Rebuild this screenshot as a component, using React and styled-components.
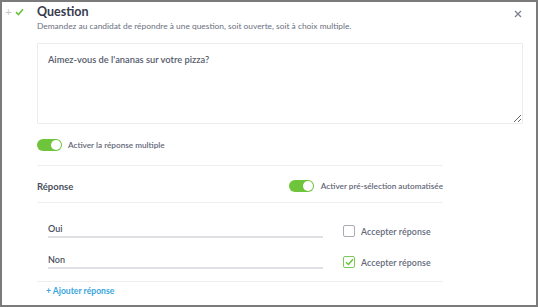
import React, { useState } from "react";
import styled, { createGlobalStyle } from "styled-components";

const GlobalStyle = createGlobalStyle`
  html, body {
    margin: 0;
    padding: 0;
    background: #fff;
  }
  * {
    box-sizing: border-box;
  }
`;

const App = () => {
  const [multiple, setMultiple] = useState(true);
  const [auto, setAuto] = useState(true);
  const [answers, setAnswers] = useState([
    { label: "Oui", accepted: false },
    { label: "Non", accepted: true },
  ]);

  const toggleAnswer = (i) => {
    setAnswers(answers.map((a, j) => (j === i ? { ...a, accepted: !a.accepted } : a)));
  };

  return (
    <>
      <GlobalStyle />
      <Frame>
        <Header>
          <HandleIcons>
            <PlusGlyph>+</PlusGlyph>
            <svg width="9" height="8" viewBox="0 0 9 8">
              <path d="M1 4.2 L3.4 6.5 L8 1.2" fill="none" stroke="#6cc33c" strokeWidth="1.6" />
            </svg>
          </HandleIcons>
          <TitleBlock>
            <Title>Question</Title>
            <Subtitle>
              Demandez au candidat de répondre à une question, soit ouverte, soit à choix multiple.
            </Subtitle>
          </TitleBlock>
          <CloseButton>
            <svg width="8" height="8" viewBox="0 0 8 8">
              <path d="M1 1 L7 7 M7 1 L1 7" stroke="#7a8090" strokeWidth="1.3" />
            </svg>
          </CloseButton>
        </Header>

        <Body>
          <QuestionArea defaultValue="Aimez-vous de l'ananas sur votre pizza?" />

          <ToggleRow>
            <Switch $on={multiple} onClick={() => setMultiple(!multiple)} />
            <SmallLabel>Activer la réponse multiple</SmallLabel>
          </ToggleRow>

          <Settings>
            <SectionRow>
              <SectionTitle>Réponse</SectionTitle>
              <InlineToggle>
                <Switch $on={auto} onClick={() => setAuto(!auto)} />
                <SmallLabel>Activer pré-sélection automatisée</SmallLabel>
              </InlineToggle>
            </SectionRow>

            <AnswerList>
              {answers.map((a, i) => (
                <AnswerRow key={a.label}>
                  <AnswerInput defaultValue={a.label} />
                  <CheckLabel onClick={() => toggleAnswer(i)}>
                    <CheckBox $checked={a.accepted}>
                      {a.accepted && (
                        <svg width="9" height="8" viewBox="0 0 9 8">
                          <path d="M1 4.2 L3.4 6.5 L8 1.2" fill="none" stroke="#6cc33c" strokeWidth="1.5" />
                        </svg>
                      )}
                    </CheckBox>
                    <CheckText>Accepter réponse</CheckText>
                  </CheckLabel>
                </AnswerRow>
              ))}
            </AnswerList>

            <AddLink>+ Ajouter réponse</AddLink>
          </Settings>
        </Body>
      </Frame>
    </>
  );
};

export default App;

// Styled Components
const Frame = styled.div`
  width: 538px;
  height: 307px;
  border: 2px solid #7b7b7b;
  background: #fff;
  font-family: Lato, "Noto Sans", sans-serif;
  color: #3b4052;
  overflow: hidden;
`;

const Header = styled.div`
  display: flex;
  align-items: flex-start;
  padding: 2px 12px 0 3px;
`;

const HandleIcons = styled.div`
  display: flex;
  align-items: center;
  gap: 3px;
  width: 32px;
  height: 16px;
`;

const PlusGlyph = styled.span`
  font-size: 12px;
  line-height: 12px;
  color: #c4c7cc;
`;

const TitleBlock = styled.div`
  flex: 1;
  display: flex;
  flex-direction: column;
`;

const Title = styled.div`
  font-size: 12.5px;
  line-height: 16px;
  font-weight: 700;
  color: #363b4e;
`;

const Subtitle = styled.div`
  font-size: 8.4px;
  line-height: 11px;
  color: #6b7080;
  margin-top: 1px;
`;

const CloseButton = styled.div`
  display: flex;
  align-items: center;
  justify-content: center;
  width: 12px;
  height: 12px;
  margin-top: 4px;
`;

const Body = styled.div`
  padding: 0 0 0 35px;
`;

const QuestionArea = styled.textarea`
  display: block;
  width: 486px;
  height: 81px;
  margin-top: 11px;
  padding: 10px 10px;
  border: 1px solid #ececec;
  border-radius: 1px;
  font-family: Lato, "Noto Sans", sans-serif;
  font-size: 9.3px;
  font-weight: 600;
  color: #555a6b;
  resize: vertical;
  outline: none;
`;

const ToggleRow = styled.div`
  display: flex;
  align-items: center;
  gap: 6px;
  margin-top: 15px;
  height: 12px;
`;

const Switch = styled.div`
  position: relative;
  width: 25px;
  height: 12px;
  border-radius: 6px;
  background: ${(p) => (p.$on ? "#6ec43a" : "#d5d8dd")};
  cursor: pointer;
  flex-shrink: 0;

  &::after {
    content: "";
    position: absolute;
    top: 1px;
    left: ${(p) => (p.$on ? "14px" : "1px")};
    width: 10px;
    height: 10px;
    border-radius: 50%;
    background: #fff;
  }
`;

const SmallLabel = styled.span`
  font-size: 8.2px;
  font-weight: 600;
  color: #626777;
  white-space: nowrap;
`;

const CheckText = styled(SmallLabel)`
  font-size: 8.8px;
  letter-spacing: 0.1px;
`;

const Settings = styled.div`
  width: 406px;
  margin-top: 14px;
`;

const SectionRow = styled.div`
  display: flex;
  align-items: center;
  justify-content: space-between;
  height: 38px;
  padding-top: 4px;
  border-top: 1px solid #eeeff1;
  border-bottom: 1px solid #eeeff1;
`;

const SectionTitle = styled.div`
  font-size: 9.5px;
  font-weight: 700;
  color: #4a4f60;
`;

const InlineToggle = styled.div`
  display: flex;
  align-items: center;
  gap: 7px;
`;

const AnswerList = styled.div`
  display: flex;
  flex-direction: column;
  gap: 15px;
  padding: 19px 0 12px 11px;
  border-bottom: 1px solid #eeeff1;
`;

const AnswerRow = styled.div`
  display: flex;
  align-items: flex-end;
  gap: 20px;
`;

const AnswerInput = styled.input`
  width: 275px;
  height: 16px;
  padding: 0 0 1px 0;
  border: none;
  border-bottom: 2px solid #dfe0e3;
  font-family: Lato, "Noto Sans", sans-serif;
  font-size: 9px;
  font-weight: 600;
  color: #4b5060;
  outline: none;
  background: transparent;
`;

const CheckLabel = styled.label`
  display: flex;
  align-items: center;
  gap: 6px;
  margin-bottom: 1px;
  cursor: pointer;
`;

const CheckBox = styled.span`
  display: flex;
  align-items: center;
  justify-content: center;
  width: 12px;
  height: 12px;
  border: 1px solid ${(p) => (p.$checked ? "#7cc85a" : "#a9acb2")};
  border-radius: 2px;
  background: #fff;
`;

const AddLink = styled.div`
  padding: 4px 0 0 9px;
  font-size: 8.6px;
  font-weight: 700;
  color: #3aa6dc;
  cursor: pointer;
`;
